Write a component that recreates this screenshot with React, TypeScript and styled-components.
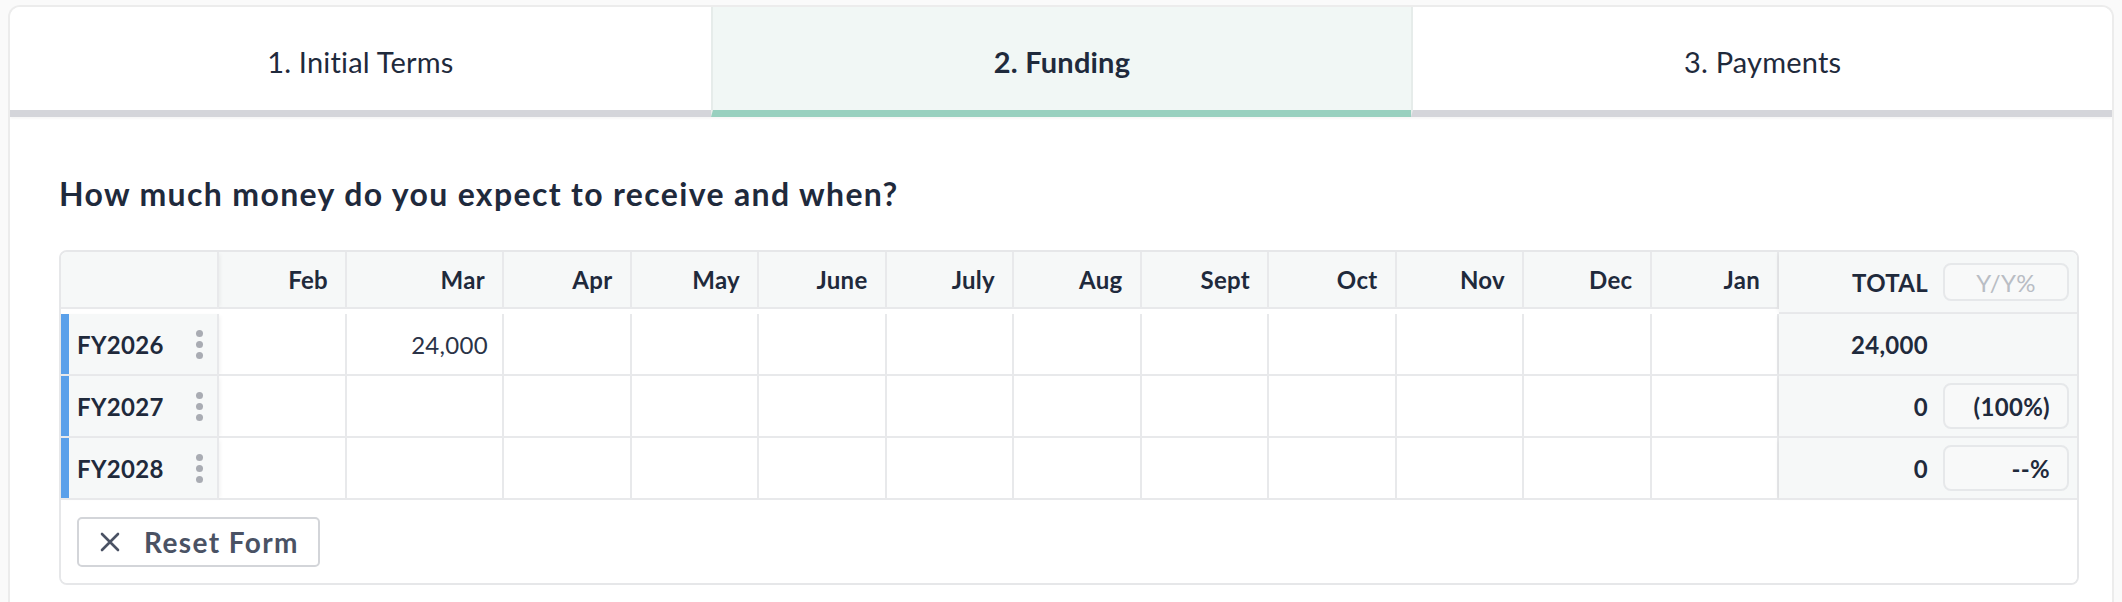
import React from "react";
import styled, { createGlobalStyle } from "styled-components";

const GlobalStyle = createGlobalStyle`
  html, body { margin: 0; padding: 0; background: #fafafa; }
  body { font-family: Lato, "Noto Sans", sans-serif; color: #1f2a3c; }
  * { box-sizing: border-box; }
`;

const Page = styled.div`
  padding: 5px 8px 0 8px;
`;

const Card = styled.div`
  background: #fff;
  border: 2px solid #ececec;
  border-bottom: none;
  border-radius: 12px 12px 0 0;
  overflow: hidden;
`;

const Tabs = styled.div`
  display: grid;
  grid-template-columns: 1fr 1fr 1fr;
  box-shadow: 0 2px 2px rgba(0, 0, 0, 0.035);
  position: relative;
  z-index: 1;
`;

const Tab = styled.div<{ $active?: boolean }>`
  height: 110px;
  display: flex;
  align-items: center;
  justify-content: center;
  padding-top: 5px;
  font-size: 29px;
  letter-spacing: 0.2px;
  font-weight: ${(p) => (p.$active ? 700 : 400)};
  color: #1f2a3c;
  background: ${(p) => (p.$active ? "#f1f7f5" : "#ffffff")};
  border-bottom: 7px solid ${(p) => (p.$active ? "#98d0bf" : "#d4d5da")};
  & + & {
    border-left: 2px solid #e6ecea;
  }
`;

const Body = styled.div`
  padding: 58px 33px 40px 49px;
`;

const Heading = styled.h2`
  margin: 0 0 37px 0;
  font-size: 32px;
  line-height: 1.2;
  letter-spacing: 1.35px;
  font-weight: 700;
  color: #1f2a3c;
`;

const Table = styled.div`
  border: 2px solid #e6e7e9;
  border-radius: 8px;
  overflow: hidden;
  display: grid;
  grid-template-columns: 158px 128px 157px repeat(10, 1fr) 298px;
`;

const Cell = styled.div<{ $kind?: "head" | "label" | "data" | "total"; $last?: boolean }>`
  height: ${(p) => (p.$kind === "head" ? "57px" : "62px")};
  border-bottom: 2px solid #e8e9eb;
  border-right: ${(p) => (p.$last ? "none" : "2px solid #e8e9eb")};
  background: ${(p) => (p.$kind === "data" ? "#ffffff" : "#f6f8f8")};
  display: flex;
  align-items: center;
  justify-content: flex-end;
  font-size: 24px;
  letter-spacing: 0.3px;
  font-weight: ${(p) => (p.$kind === "data" ? 400 : 700)};
  color: ${(p) => (p.$kind === "data" ? "#2a3347" : "#1f2a3c")};
  padding-right: ${(p) => (p.$kind === "data" ? "14px" : p.$kind === "total" ? "8px" : "17px")};
`;

const LabelCell = styled.div<{ $head?: boolean }>`
  height: ${(p) => (p.$head ? "57px" : "62px")};
  border-bottom: 2px solid #e8e9eb;
  border-right: 2px solid #e8e9eb;
  background: #f6f8f8;
  box-shadow: ${(p) =>
    p.$head
      ? "3px 0 4px -2px rgba(0,0,0,0.06)"
      : "inset 8px 0 0 #5aa0ea, 3px 0 4px -2px rgba(0,0,0,0.06)"};
  position: relative;
  z-index: 1;
  display: flex;
  align-items: center;
  justify-content: space-between;
  padding: 0 14px 0 16px;
  font-size: 24px;
  letter-spacing: 0.3px;
  font-weight: 700;
  color: #1f2a3c;
`;

const TotalCell = styled(Cell)`
  gap: 15px;
  box-shadow: -3px 0 4px -2px rgba(0, 0, 0, 0.06);
  position: relative;
  z-index: 1;
`;

const Pill = styled.div<{ $head?: boolean; $empty?: boolean }>`
  width: 126px;
  height: ${(p) => (p.$head ? "38px" : "46px")};
  border: 2px solid ${(p) => (p.$empty ? "transparent" : "#e6e8ea")};
  border-radius: 8px;
  background: ${(p) => (p.$empty ? "transparent" : "#f8f9f9")};
  display: flex;
  align-items: center;
  justify-content: ${(p) => (p.$head ? "center" : "flex-end")};
  padding-right: ${(p) => (p.$head ? "0" : "17px")};
  font-size: 24px;
  font-weight: ${(p) => (p.$head ? 400 : 700)};
  color: ${(p) => (p.$head ? "#b9bdc4" : "#1f2a3c")};
`;

const Dots = styled.div`
  display: flex;
  flex-direction: column;
  gap: 4.3px;
  & > span {
    width: 7px;
    height: 7px;
    border-radius: 50%;
    background: #a9acb3;
  }
`;

const Footer = styled.div`
  grid-column: 1 / -1;
  padding: 17px 16px 16px;
  background: #fff;
`;

const ResetButton = styled.button`
  height: 50px;
  display: inline-flex;
  align-items: center;
  gap: 24px;
  padding: 0 19px 0 21px;
  background: #fff;
  border: 2px solid #d3d5d9;
  border-radius: 5px;
  font-family: Lato, "Noto Sans", sans-serif;
  font-size: 28px;
  letter-spacing: 1.4px;
  font-weight: 700;
  white-space: nowrap;
  color: #4a5264;
  cursor: pointer;
  & > svg {
    flex-shrink: 0;
  }
`;

const months = ["Feb", "Mar", "Apr", "May", "June", "July", "Aug", "Sept", "Oct", "Nov", "Dec", "Jan"];

type Row = { year: string; values: Record<string, string>; total: string; yy?: string };

const rows: Row[] = [
  { year: "FY2026", values: { Mar: "24,000" }, total: "24,000" },
  { year: "FY2027", values: {}, total: "0", yy: "(100%)" },
  { year: "FY2028", values: {}, total: "0", yy: "--%" },
];

const XIcon = () => (
  <svg width="20" height="20" viewBox="0 0 20 20" fill="none" stroke="#4a5264" strokeWidth="2.6" strokeLinecap="round">
    <path d="M2 2 L18 18 M18 2 L2 18" />
  </svg>
);

export default function App() {
  return (
    <>
      <GlobalStyle />
      <Page>
        <Card>
          <Tabs>
            <Tab>1. Initial Terms</Tab>
            <Tab $active>2. Funding</Tab>
            <Tab>3. Payments</Tab>
          </Tabs>
          <Body>
            <Heading>How much money do you expect to receive and when?</Heading>
            <Table>
              <LabelCell $head />
              {months.map((m) => (
                <Cell key={m} $kind="head">
                  {m}
                </Cell>
              ))}
              <TotalCell $kind="total" $last>
                TOTAL
                <Pill $head>Y/Y%</Pill>
              </TotalCell>
              {rows.map((r) => (
                <React.Fragment key={r.year}>
                  <LabelCell>
                    {r.year}
                    <Dots>
                      <span />
                      <span />
                      <span />
                    </Dots>
                  </LabelCell>
                  {months.map((m) => (
                    <Cell key={m} $kind="data">
                      {r.values[m] ?? ""}
                    </Cell>
                  ))}
                  <TotalCell $kind="total" $last>
                    {r.total}
                    {r.yy ? <Pill>{r.yy}</Pill> : <Pill $empty />}
                  </TotalCell>
                </React.Fragment>
              ))}
              <Footer>
                <ResetButton>
                  <XIcon />
                  Reset Form
                </ResetButton>
              </Footer>
            </Table>
          </Body>
        </Card>
      </Page>
    </>
  );
}
